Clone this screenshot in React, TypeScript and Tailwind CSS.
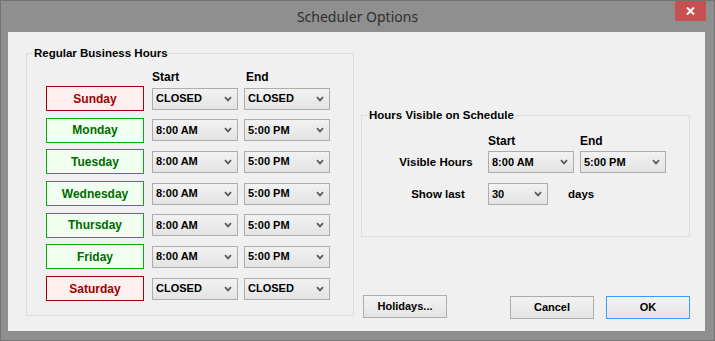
import React from "react";

interface DayRow {
  day: string;
  closed: boolean;
}

const days: DayRow[] = [
  { day: "Sunday", closed: true },
  { day: "Monday", closed: false },
  { day: "Tuesday", closed: false },
  { day: "Wednesday", closed: false },
  { day: "Thursday", closed: false },
  { day: "Friday", closed: false },
  { day: "Saturday", closed: true },
];

function Chevron() {
  return (
    <svg width="8" height="6" viewBox="0 0 8 6" className="shrink-0">
      <path d="M1 1.2 L4 4.4 L7 1.2" stroke="#5a5a5a" strokeWidth="1.7" fill="none" />
    </svg>
  );
}

function Combo({ value, className }: { value: string; className: string }) {
  return (
    <div
      className={`flex items-center justify-between h-[22px] border border-[#adadad] bg-linear-to-b from-[#f2f2f2] to-[#e4e4e4] pl-[3px] pr-[5px] text-[11px] font-bold text-black ${className}`}
    >
      <span className="leading-[13px]">{value}</span>
      <Chevron />
    </div>
  );
}

function Button({ label, primary }: { label: string; primary?: boolean }) {
  return (
    <button
      className={`w-[84px] h-[23px] border bg-linear-to-b from-[#f2f2f2] to-[#e4e4e4] text-[11px] font-bold text-black leading-[13px] ${
        primary ? "border-[#3c9cf0]" : "border-[#adadad]"
      }`}
    >
      {label}
    </button>
  );
}

export default function App() {
  return (
    <div className="w-[715px] h-[341px] bg-[#8f8f8f] border border-[#737373] flex flex-col font-['Liberation_Sans',Arial,sans-serif] overflow-hidden">
      <div className="relative h-[31px] flex items-center justify-center">
        <span className="font-['Noto_Sans',sans-serif] text-[14px] text-[#2e2e2e] leading-[18px] mt-[1px]">
          Scheduler Options
        </span>
        <div className="absolute top-0 right-[8px] w-[31px] h-[20px] bg-[#c75050] flex items-center justify-center">
          <svg width="9" height="8" viewBox="0 0 9 8">
            <path d="M1 0.5 L8 7.5 M8 0.5 L1 7.5" stroke="#ffffff" strokeWidth="2" />
          </svg>
        </div>
      </div>

      <div className="ml-[7px] w-[697px] h-[299px] bg-[#f0f0f0] flex items-start text-black">
        {/* Regular Business Hours */}
        <div className="relative ml-[18px] mt-[21px] w-[328px] h-[263px] border border-[#dcdcdc] pl-[19px] pt-[16px]">
          <span className="absolute left-[6px] -top-[7px] px-[1px] bg-[#f0f0f0] text-[11.5px] font-bold leading-[13px]">
            Regular Business Hours
          </span>
          <div className="flex h-[14px] mb-[2px] text-[12px] font-bold leading-[14px]">
            <div className="w-[106px]" />
            <div className="w-[86px]">Start</div>
            <div className="ml-[8px]">End</div>
          </div>
          <div className="flex flex-col gap-[6.7px]">
            {days.map((d) => (
              <div key={d.day} className="flex items-center">
                <div
                  className={`w-[98px] h-[25px] mr-[8px] border flex items-center justify-center text-[12px] font-bold leading-[14px] ${
                    d.closed
                      ? "border-[#a80000] bg-[#fff0f0] text-[#a00000]"
                      : "border-[#10a810] bg-[#f0fff0] text-[#006a00]"
                  }`}
                >
                  {d.day}
                </div>
                <Combo value={d.closed ? "CLOSED" : "8:00 AM"} className="w-[86px]" />
                <Combo value={d.closed ? "CLOSED" : "5:00 PM"} className="w-[86px] ml-[6px]" />
              </div>
            ))}
          </div>
        </div>

        {/* Right column */}
        <div className="ml-[7px] flex flex-col">
          <div className="relative mt-[83px] w-[329px] h-[122px] border border-[#dcdcdc] pl-[30px] pt-[18px]">
            <span className="absolute left-[6px] -top-[7px] px-[1px] bg-[#f0f0f0] text-[11.5px] font-bold leading-[13px]">
              Hours Visible on Schedule
            </span>
            <div className="flex h-[14px] mb-[3px] text-[12px] font-bold leading-[14px]">
              <div className="w-[96px]" />
              <div className="w-[92px]">Start</div>
              <div>End</div>
            </div>
            <div className="flex items-center">
              <div className="w-[88px] mr-[8px] text-center text-[11.5px] font-bold leading-[13px]">Visible Hours</div>
              <Combo value="8:00 AM" className="w-[86px]" />
              <Combo value="5:00 PM" className="w-[86px] ml-[6px]" />
            </div>
            <div className="flex items-center mt-[10px]">
              <div className="w-[88px] mr-[8px] text-center text-[11.5px] font-bold leading-[13px] pl-[4px]">Show last</div>
              <Combo value="30" className="w-[60px]" />
              <span className="ml-[20px] text-[11.5px] font-bold leading-[13px]">days</span>
            </div>
          </div>

          <div className="mt-[57px] ml-[2px] flex items-center">
            <Button label="Holidays..." />
            <div className="ml-[63px]">
              <Button label="Cancel" />
            </div>
            <div className="ml-[12px]">
              <Button label="OK" primary />
            </div>
          </div>
        </div>
      </div>
    </div>
  );
}
